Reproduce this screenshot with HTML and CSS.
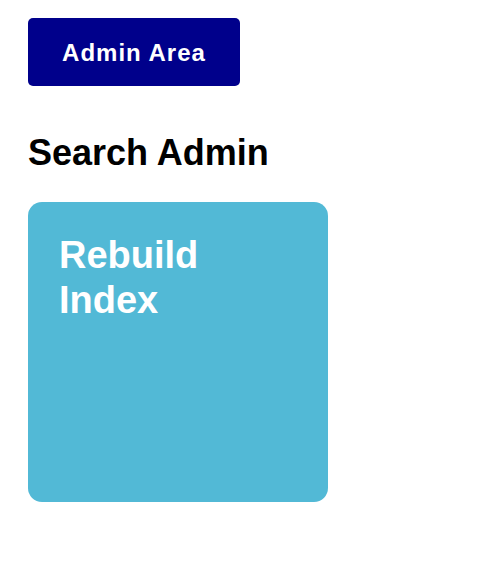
FILE: index.html
```html
<!DOCTYPE html>
<html lang="en">
<head>
<meta charset="utf-8">
<title>Search Admin</title>
<link rel="stylesheet" href="styles.css">
</head>
<body>
<main class="page">
  <a class="admin-btn" href="#">Admin Area</a>
  <h1 class="title">Search Admin</h1>
  <div class="tiles">
    <a class="tile" href="#">Rebuild Index</a>
  </div>
</main>
</body>
</html>
```
FILE: styles.css
```css
html, body {
  margin: 0;
  padding: 0;
  background: #ffffff;
}
body {
  font-family: "Liberation Sans", Arial, sans-serif;
}
.page {
  padding: 18px 28px;
  display: flex;
  flex-direction: column;
  align-items: flex-start;
}
.admin-btn {
  display: flex;
  align-items: center;
  justify-content: center;
  box-sizing: border-box;
  width: 212px;
  height: 68px;
  padding-top: 1px;
  background: #00008b;
  color: #ffffff;
  border-radius: 5px;
  font-weight: bold;
  font-size: 24px;
  letter-spacing: 1px;
  text-decoration: none;
}
.title {
  margin: 46px 0 0 0;
  font-size: 36px;
  line-height: 41px;
  font-weight: bold;
  color: #000000;
}
.tiles {
  margin-top: 29px;
  display: grid;
  grid-template-columns: 300px;
}
.tile {
  box-sizing: border-box;
  width: 300px;
  height: 300px;
  padding: 31px 30px 31px 31px;
  background: #52b9d6;
  border-radius: 14px;
  color: #ffffff;
  font-weight: bold;
  font-size: 38px;
  line-height: 45px;
  text-decoration: none;
}
```
